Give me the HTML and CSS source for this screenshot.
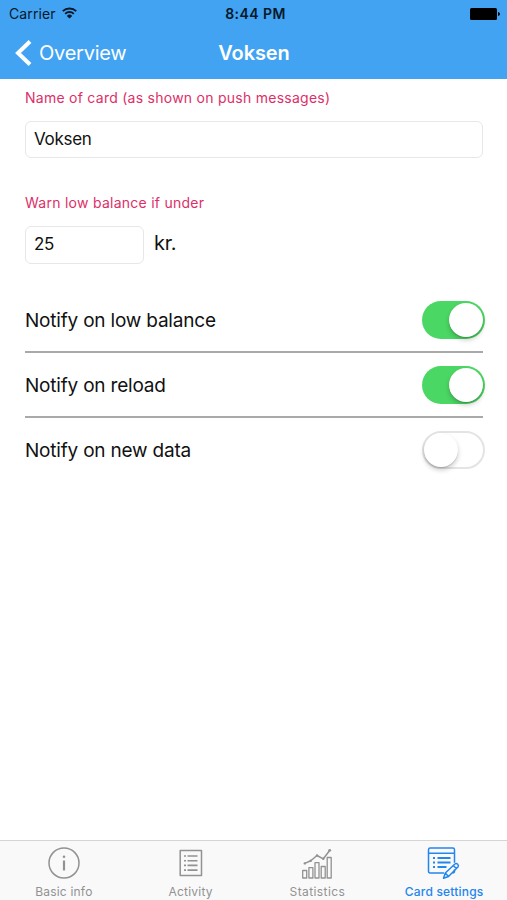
FILE: index.html
```html
<!DOCTYPE html>
<html lang="en">
<head>
<meta charset="utf-8">
<title>Card settings</title>
<link rel="stylesheet" href="styles.css">
</head>
<body>
<div class="screen">
  <header class="header">
    <div class="status">
      <div class="carrier"><span>Carrier</span>
        <svg class="wifi" width="15" height="12" viewBox="0 0 15 12"><g fill="none" stroke="#07182a" stroke-width="1.9"><path d="M.8 4.2a9.5 9.5 0 0 1 13.4 0"/><path d="M3.2 6.8a6.1 6.1 0 0 1 8.6 0"/></g><path fill="#07182a" d="M7.5 11.6 4.8 8.9a3.8 3.8 0 0 1 5.4 0z"/></svg>
      </div>
      <span class="time">8:44 PM</span>
      <svg class="battery" width="30" height="12" viewBox="0 0 30 12"><rect width="27" height="12" rx="1.5"/><path d="M28 4q2 .4 2 2t-2 2z"/></svg>
    </div>
    <nav class="nav">
      <a class="back"><svg width="17" height="26" viewBox="0 0 17 26"><path d="M15 1.5 3 13l12 11.500" fill="none" stroke="#fff" stroke-width="4"/></svg><span>Overview</span></a>
      <h1 class="title">Voksen</h1>
    </nav>
  </header>
  <main class="content">
    <label class="label name-label">Name of card (as shown on push messages)</label>
    <div class="field">Voksen</div>
    <label class="label warn-label">Warn low balance if under</label>
    <div class="amount"><div class="field short">25</div><span class="unit">kr.</span></div>
    <div class="rows">
      <div class="row"><span>Notify on low balance</span><span class="switch on"><i></i></span></div>
      <div class="row"><span>Notify on reload</span><span class="switch on"><i></i></span></div>
      <div class="row"><span>Notify on new data</span><span class="switch"><i></i></span></div>
    </div>
  </main>
  <footer class="tabs">
    <div class="tab"><svg width="34" height="36" viewBox="0 0 34 36"><circle cx="17" cy="18" r="15"/><path d="M17 15.500v10" stroke-width="2.200"/><circle class="solid" cx="17" cy="11.700" r="1.300"/></svg><span class="t1">Basic info</span></div>
    <div class="tab"><svg width="34" height="36" viewBox="0 0 34 36"><path d="M6.200 5.600h21.300v24.800H6.200z"/><path d="M13.500 11h10M13.500 15.700h10M13.500 20.400h10M13.500 25.100h10M10 11h2M10 15.700h2M10 20.400h2M10 25.100h2" stroke-width="1.600"/></svg><span class="t2">Activity</span></div>
    <div class="tab"><svg width="34" height="36" viewBox="0 0 34 36"><path d="M2.700 25.500h4v7.500h-4zM8.900 22.700h4V33h-4zM15 17.700h4V33h-4zM21.200 21.500h4V33h-4zM27.200 12.500h4V33h-4z" stroke-width="1.300"/><path d="m4.800 18.400 6-2.700 6.200-5.200 6.300 3.300 6.400-8.300"/><circle class="solid" cx="4.800" cy="18.400" r="1.200"/><circle class="solid" cx="10.800" cy="15.700" r="1.200"/><circle class="solid" cx="17" cy="10.500" r="1.200"/><circle class="solid" cx="23.300" cy="13.800" r="1.200"/><circle class="solid" cx="29.700" cy="5.300" r="1.400"/></svg><span class="t3">Statistics</span></div>
    <div class="tab active"><svg width="34" height="36" viewBox="0 0 34 36"><path d="M17 28H3.200Q1.500 28 1.500 26.300V4.700Q1.500 3 3.200 3h22.600q1.700 0 1.700 1.700v13M1.500 8.200h26M27.500 24.500v1.800q0 1.700-2 1.700"/><path d="M10.500 13h13M10.500 17.500h13M10.500 22h9M6 13h2M6 17.500h2M6 22h2" stroke-width="2"/><path d="m18.300 28 9.600-9q1.400-1.200 2.800.2t.2 2.800L21.500 31.500l-5 1.800zM26.300 20.500l3 3M18.300 28l3.200 3.500"/></svg><span class="t4">Card settings</span></div>
  </footer>
</div>
</body>
</html>
```
FILE: styles.css
```css
* { box-sizing: border-box; }
body { margin: 0; background: #fff; color: #111; font-family: Inter, Roboto, sans-serif; }
.screen { width: 507px; height: 900px; display: flex; flex-direction: column; }
.screen span, .field, .label, .title { white-space: nowrap; }
.header { height: 79px; background: #41a3f2; }
.status { height: 27px; display: grid; grid-template-columns: 1fr auto 1fr; align-items: center; padding: 1px 7px 0 9px; color: #07182a; font-size: 14px; line-height: 18px; }
.carrier { display: flex; align-items: center; gap: 6px; letter-spacing: .1px; }
.wifi { margin-top: -2px; }
.time { font-weight: 600; letter-spacing: .45px; padding-left: 2px; }
.battery { justify-self: end; fill: #000; margin-top: -1px; }
.nav { height: 52px; display: grid; grid-template-columns: 1fr auto 1fr; align-items: center; padding: 0 14px 0 15px; color: #fff; }
.back { display: flex; align-items: center; gap: 7px; font-size: 20px; letter-spacing: -.25px; }
.title { margin: 0; font-size: 20px; font-weight: 600; letter-spacing: -.1px; }
.content { flex: 1; padding: 9px 24px 0 25px; }
.label { display: block; height: 20px; line-height: 20px; font-size: 14px; letter-spacing: .26px; color: #dc2f68; }
.field { height: 37px; margin-top: 13px; padding: 0 8px; border: 1px solid #e7e7e7; border-radius: 6px; font-size: 17px; line-height: 34px; letter-spacing: -.3px; }
.warn-label { margin-top: 35px; }
.amount { display: flex; align-items: center; gap: 10px; margin-top: 13px; }
.short { width: 119px; height: 38px; margin: 0; line-height: 35px; }
.unit { font-size: 20px; margin-top: -5px; letter-spacing: -.3px; }
.rows { margin-top: 24px; }
.row { height: 65px; padding-top: 1px; display: flex; align-items: center; justify-content: space-between; border-bottom: 2px solid #a9a9a9; font-size: 19px; letter-spacing: -.2px; }
.row span:first-child { padding-top: 1px; }
.row:last-child { border: 0; height: 63px; }
.switch { width: 63px; height: 38px; margin-right: -2px; padding: 2px; border-radius: 19px; display: flex; background: #fff; border: 2px solid #e4e4e4; flex: none; }
.switch i { width: 34px; height: 34px; margin: 0 -2px; margin-top: -2px; border-radius: 50%; background: #fff; box-shadow: 0 3px 5px #0003, 0 1px 1px #0002; }
.switch.on { background: #4bd763; border: 0; justify-content: flex-end; }
.switch.on i { margin: 0; }
.tabs { height: 60px; display: grid; grid-template-columns: repeat(4, 1fr); background: #f9f9f9; border-top: 1px solid #d5d5d5; }
.tab { display: flex; flex-direction: column; align-items: center; padding: 4px 0 0 1px; color: #929292; font-size: 12px; line-height: 16px; letter-spacing: .2px; }
.tab span { margin-top: 3px; }
.tab .t3 { letter-spacing: .4px; }
.tab .t4 { font-weight: 500; letter-spacing: .2px; }
.tab svg { fill: none; stroke: currentColor; stroke-width: 1.5; stroke-linejoin: round; }
.tab .solid { fill: currentColor; stroke: none; }
.active { color: #2385ee; }
```
